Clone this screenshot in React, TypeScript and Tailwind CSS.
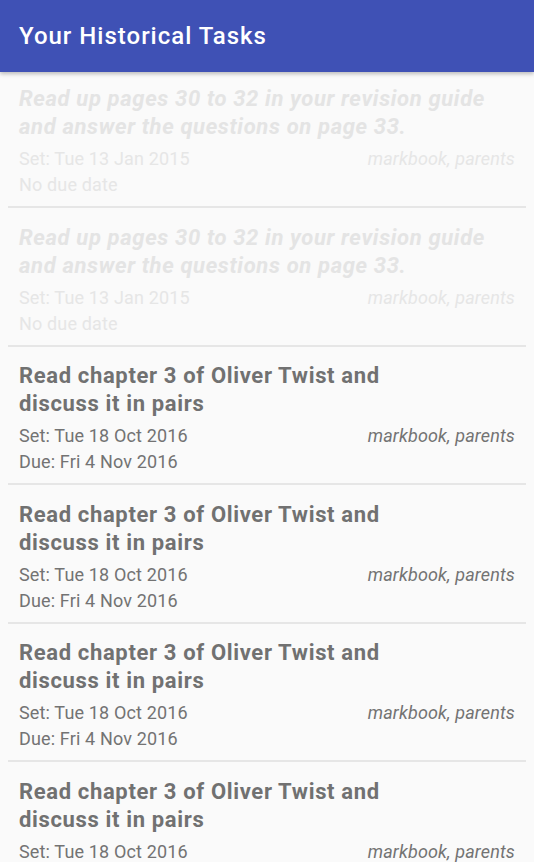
import React from 'react';

interface Task {
  title: string[];
  set: string;
  due: string;
  tags: string;
  faded?: boolean;
}

const tasks: Task[] = [
  {
    title: ['Read up pages 30 to 32 in your revision guide', 'and answer the questions on page 33.'],
    set: 'Set: Tue 13 Jan 2015',
    due: 'No due date',
    tags: 'markbook, parents',
    faded: true,
  },
  {
    title: ['Read up pages 30 to 32 in your revision guide', 'and answer the questions on page 33.'],
    set: 'Set: Tue 13 Jan 2015',
    due: 'No due date',
    tags: 'markbook, parents',
    faded: true,
  },
  {
    title: ['Read chapter 3 of Oliver Twist and', 'discuss it in pairs'],
    set: 'Set: Tue 18 Oct 2016',
    due: 'Due: Fri 4 Nov 2016',
    tags: 'markbook, parents',
  },
  {
    title: ['Read chapter 3 of Oliver Twist and', 'discuss it in pairs'],
    set: 'Set: Tue 18 Oct 2016',
    due: 'Due: Fri 4 Nov 2016',
    tags: 'markbook, parents',
  },
  {
    title: ['Read chapter 3 of Oliver Twist and', 'discuss it in pairs'],
    set: 'Set: Tue 18 Oct 2016',
    due: 'Due: Fri 4 Nov 2016',
    tags: 'markbook, parents',
  },
  {
    title: ['Read chapter 3 of Oliver Twist and', 'discuss it in pairs'],
    set: 'Set: Tue 18 Oct 2016',
    due: 'Due: Fri 4 Nov 2016',
    tags: 'markbook, parents',
  },
];

const TaskRow: React.FC<{ task: Task; first: boolean }> = ({ task, first }) => {
  const titleColor = task.faded ? 'text-[#e4e4e4] italic' : 'text-[#717171]';
  const metaColor = task.faded ? 'text-[#e6e6e6]' : 'text-[#737373]';
  return (
    <div className="mx-2 border-b-2 border-[#e6e6e6]">
      <div className={`px-[11px] pb-[8px] ${first ? 'pt-[13px]' : 'pt-[15.5px]'}`}>
        <div className={`text-[22px] leading-[28px] font-bold tracking-[0.65px] whitespace-nowrap ${titleColor}`}>
          {task.title.map((line, i) => (
            <div key={i}>{line}</div>
          ))}
        </div>
        <div className={`mt-[5px] text-[18px] leading-[26px] tracking-[0.15px] whitespace-nowrap ${metaColor}`}>
          <div className="flex justify-between">
            <span>{task.set}</span>
            <span className="italic">{task.tags}</span>
          </div>
          <div>{task.due}</div>
        </div>
      </div>
    </div>
  );
};

export default function App() {
  return (
    <div className="h-[862px] w-[534px] overflow-hidden bg-[#fafafa] font-['Roboto',sans-serif]">
      <header className="relative z-10 flex h-[72px] items-center bg-[#3f51b5] px-[19px] shadow-[0_2px_4px_rgba(0,0,0,0.25)]">
        <h1 className="text-[24px] font-medium tracking-[1px] text-white">Your Historical Tasks</h1>
      </header>
      <div>
        {tasks.map((t, i) => (
          <TaskRow key={i} task={t} first={i === 0} />
        ))}
      </div>
    </div>
  );
}
